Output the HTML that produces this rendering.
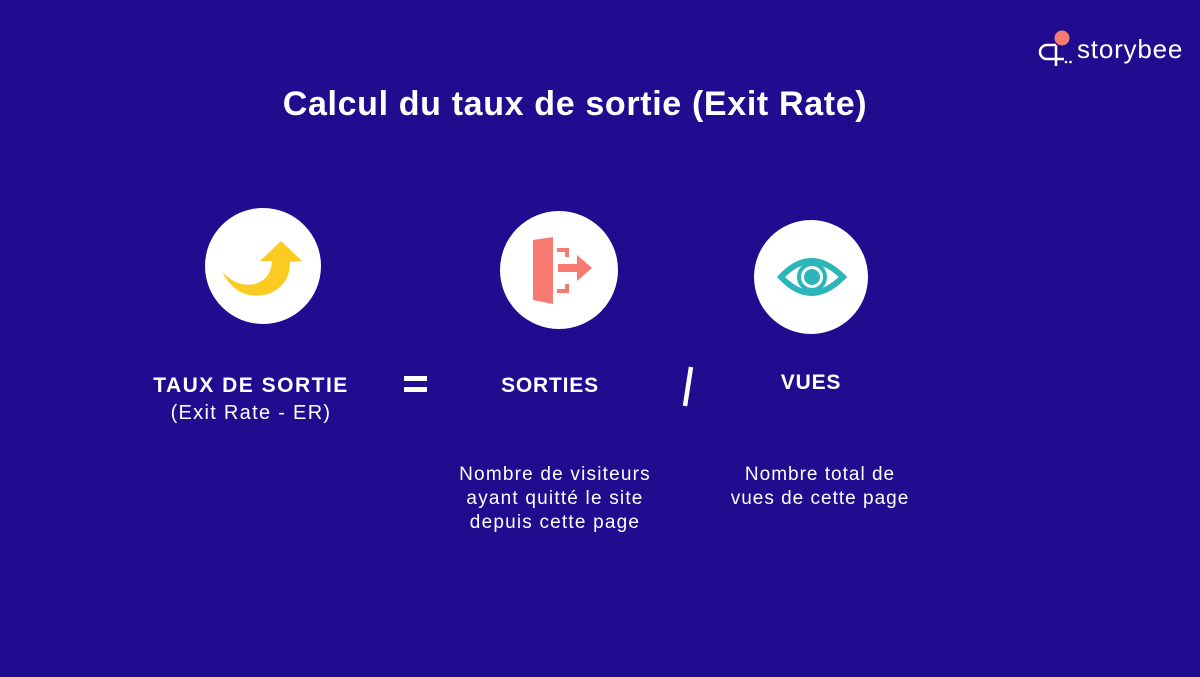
<!DOCTYPE html>
<html><head><meta charset="utf-8"><style>
html,body{margin:0;padding:0}
body{width:1200px;height:677px;background:#210c8f;position:relative;overflow:hidden;font-family:"Liberation Sans",sans-serif;color:#fff}
.t{position:absolute;white-space:nowrap;text-align:center}
.c{position:absolute;background:#fff;border-radius:50%}
</style></head><body>
<div class="t" style="left:0;width:1150px;top:85px;font-size:34px;font-weight:bold;letter-spacing:0.65px">Calcul du taux de sortie (Exit Rate)</div>

<div class="c" style="left:205px;top:208px;width:116px;height:116px"></div>
<div class="c" style="left:500px;top:211px;width:118px;height:118px"></div>
<div class="c" style="left:754px;top:220px;width:114px;height:114px"></div>

<svg style="position:absolute;left:0;top:0" width="1200" height="677">
 <path d="M222,272 Q238,302 268,294 Q290,286 290,262 L302,261 L281,241 L260,261 L272,261 Q271,279 255,284 Q238,288 222,272 Z" fill="#fbcb21"/>
 <path d="M533,240 L553,237 L553,304 L533,300 Z" fill="#f77a72"/>
 <path d="M557,248 H569 V257 H565 V252 H557 Z M557,293 H569 V284 H565 V289 H557 Z" fill="#f77a72"/>
 <path d="M558,264 H577 V255 L592,268 L577,281 V272 H558 Z" fill="#f77a72"/>
 <path d="M781,277 Q811,245 843,277 Q811,309 781,277 Z" fill="none" stroke="#2bb6b9" stroke-width="6"/>
 <circle cx="812" cy="277" r="13" fill="none" stroke="#2bb6b9" stroke-width="4"/>
 <circle cx="812" cy="277" r="8" fill="#2bb6b9"/>
 <path d="M1056,45 H1047 a7,7 0 0 0 0,14 H1064 M1056,45 V66" fill="none" stroke="#fff" stroke-width="2.5"/>
 <circle cx="1062" cy="38" r="7.5" fill="#f77a72"/>
 <circle cx="1066" cy="62" r="1.3" fill="#fff"/><circle cx="1070.5" cy="62" r="1.3" fill="#fff"/>
 <rect x="404" y="376" width="23" height="5" fill="#fff"/><rect x="404" y="387" width="23" height="5" fill="#fff"/>
 <path d="M691,367 L685,406" stroke="#fff" stroke-width="4.5"/>
</svg>
<div class="t" style="left:1077px;top:34px;font-size:26px;letter-spacing:0.8px">storybee</div>

<div class="t" style="left:140px;width:222px;top:374px;font-size:21px;font-weight:bold;letter-spacing:1.5px">TAUX DE SORTIE</div>
<div class="t" style="left:140px;width:222px;top:402px;font-size:20px;letter-spacing:1.3px">(Exit Rate - ER)</div>
<div class="t" style="left:450px;width:200px;top:374px;font-size:21px;font-weight:bold;letter-spacing:0.8px">SORTIES</div>
<div class="t" style="left:711px;width:200px;top:371px;font-size:21px;font-weight:bold;letter-spacing:0.8px">VUES</div>
<div class="t" style="left:430px;width:250px;top:463px;font-size:19px;line-height:24px;letter-spacing:1.2px">Nombre de visiteurs<br>ayant quitté le site<br>depuis cette page</div>
<div class="t" style="left:695px;width:250px;top:463px;font-size:19px;line-height:24px;letter-spacing:1px">Nombre total de<br>vues de cette page</div>
</body></html>
